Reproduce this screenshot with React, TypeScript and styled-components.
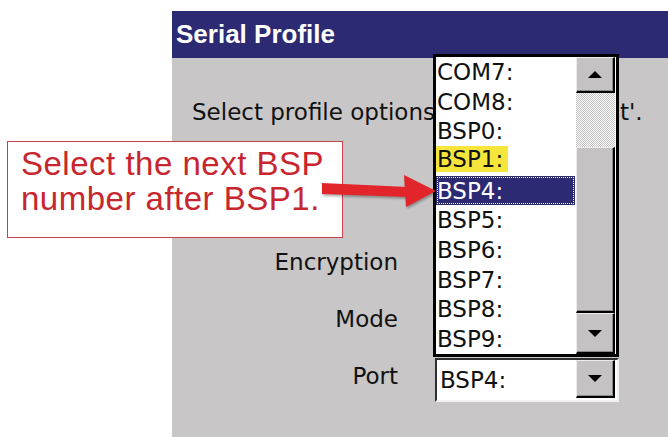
import React from "react";
import styled, { createGlobalStyle, css } from "styled-components";

const GlobalStyle = createGlobalStyle`
  html, body { margin: 0; padding: 0; background: #fff; }
  body {
    width: 668px;
    height: 437px;
    overflow: hidden;
    font-family: "DejaVu Sans", Verdana, sans-serif;
  }
`;

const Page = styled.div`
  position: relative;
  width: 668px;
  height: 437px;
  padding: 11px 0 0 172px;
  box-sizing: border-box;
  overflow: hidden;
  background: #fff;
`;

const Dialog = styled.div`
  position: relative;
  width: 496px;
  height: 426px;
  background: #c8c6c6;
  display: flex;
  flex-direction: column;
`;

const TitleBar = styled.div`
  flex: none;
  height: 47px;
  background: #2c2a73;
  display: flex;
  align-items: center;
  padding-left: 4px;
  color: #fff;
  font: bold 26px "Liberation Sans", Arial, sans-serif;
`;

const Body = styled.div`
  flex: 1;
  display: flex;
  flex-direction: column;
  padding-top: 40px;
  color: #111;
  font-size: 23px;
  line-height: 28px;
`;

const Prompt = styled.div`
  display: flex;
  padding-left: 20px;
  white-space: nowrap;
`;

const PromptStart = styled.span`
  display: block;
  width: 428px;
  overflow: hidden;
`;

const Form = styled.div`
  margin-top: 111px;
  display: grid;
  grid-template-columns: 226px 184px;
  grid-auto-rows: 57px;
  column-gap: 37px;
  align-items: center;
`;

const Label = styled.div`
  text-align: right;
  margin-bottom: 8px;
`;

const Combo = styled.div`
  box-sizing: border-box;
  width: 184px;
  height: 44px;
  background: #fff;
  border-style: solid;
  border-width: 2px;
  border-color: #2e2e2e #f2f2f2 #f2f2f2 #2e2e2e;
  display: flex;
  align-items: center;
  justify-content: space-between;
  padding: 0 2px 2px 3px;
`;

const ComboValue = styled.span`
  padding-top: 2px;
`;

const ScrollButton = styled.div<{ $h: number }>`
  box-sizing: border-box;
  flex: none;
  width: 39px;
  height: ${(p) => p.$h}px;
  background: #c4c2c2;
  border-style: solid;
  border-width: 1px 2px 2px 1px;
  border-color: #ececec #000 #000 #ececec;
  box-shadow: inset -1px -1px 0 #8a8a8a;
  display: flex;
  align-items: center;
  justify-content: center;
`;

const Triangle = styled.span<{ $up?: boolean }>`
  width: 0;
  height: 0;
  border-left: 7px solid transparent;
  border-right: 7px solid transparent;
  ${(p) =>
    p.$up
      ? css`border-bottom: 7px solid #000;`
      : css`border-top: 7px solid #000;`}
`;

const DropList = styled.div`
  position: absolute;
  left: 261px;
  top: 43px;
  z-index: 2;
  box-sizing: border-box;
  width: 186px;
  height: 303px;
  border: 3px solid #000;
  background: #fff;
  display: flex;
  color: #111;
  font-size: 23px;
`;

const Items = styled.ul`
  width: 140px;
  margin: 0;
  padding: 0;
  list-style: none;
  display: flex;
  flex-direction: column;
`;

const Item = styled.li<{ $selected?: boolean }>`
  box-sizing: border-box;
  height: 29.7px;
  display: flex;
  align-items: center;
  padding-left: 1px;
  ${(p) =>
    p.$selected &&
    css`
      background: #2c2a73;
      color: #fff;
      outline: 1px dotted #fff;
      outline-offset: -2px;
    `}
`;

const Marked = styled.span`
  display: flex;
  align-items: center;
  height: 26px;
  margin-left: -1px;
  padding: 0 5px 0 1px;
  align-self: flex-start;
  background: #f6e63c;
`;

const ScrollBar = styled.div`
  width: 40px;
  display: flex;
  flex-direction: column;
  border-left: 1px solid #fff;
`;

const Track = styled.div`
  flex: none;
  height: 54px;
  width: 39px;
  background: repeating-conic-gradient(#c2c2c2 0 25%, #fff 0 50%) 0 0 / 2px 2px;
`;

const Callout = styled.div`
  position: absolute;
  left: 7px;
  top: 141px;
  z-index: 3;
  box-sizing: border-box;
  width: 336px;
  height: 97px;
  border: 1px solid #c8414a;
  background: #fff;
  color: #c8262f;
  font: 33px/35px "Liberation Sans", Arial, sans-serif;
  letter-spacing: 0.5px;
  padding: 4px 0 0 13px;
  white-space: nowrap;
`;

const Arrow = styled.svg`
  position: absolute;
  left: 318px;
  top: 170px;
  z-index: 4;
  overflow: visible;
  filter: drop-shadow(1px 2px 1px rgba(0, 0, 0, 0.3));
`;

const items = ["COM7:", "COM8:", "BSP0:", "BSP1:", "BSP4:", "BSP5:", "BSP6:", "BSP7:", "BSP8:", "BSP9:"];

export default function App() {
  return (
    <>
      <GlobalStyle />
      <Page>
        <Dialog>
          <TitleBar>Serial Profile</TitleBar>
          <Body>
            <Prompt>
              <PromptStart>Select profile options</PromptStart>
              <span>t'.</span>
            </Prompt>
            <Form>
              <Label>Encryption</Label>
              <Combo>
                <ScrollButton $h={38}><Triangle /></ScrollButton>
              </Combo>
              <Label>Mode</Label>
              <Combo>
                <ScrollButton $h={38}><Triangle /></ScrollButton>
              </Combo>
              <Label>Port</Label>
              <Combo>
                <ComboValue>BSP4:</ComboValue>
                <ScrollButton $h={38}><Triangle /></ScrollButton>
              </Combo>
            </Form>
          </Body>
          <DropList>
            <Items>
              {items.map((it) => (
                <Item key={it} $selected={it === "BSP4:"}>
                  {it === "BSP1:" ? <Marked>{it}</Marked> : it}
                </Item>
              ))}
            </Items>
            <ScrollBar>
              <ScrollButton $h={36}><Triangle $up /></ScrollButton>
              <Track />
              <ScrollButton $h={166} />
              <ScrollButton $h={41}><Triangle /></ScrollButton>
            </ScrollBar>
          </DropList>
        </Dialog>
        <Callout>
          Select the next BSP
          <br />
          number after BSP1.
        </Callout>
        <Arrow width="120" height="40" viewBox="0 0 120 40">
          <polygon points="4,13 90,17 90,27 4,24" fill="#e2252b" />
          <polygon points="86,5 118,21 88,37" fill="#e2252b" />
        </Arrow>
      </Page>
    </>
  );
}
